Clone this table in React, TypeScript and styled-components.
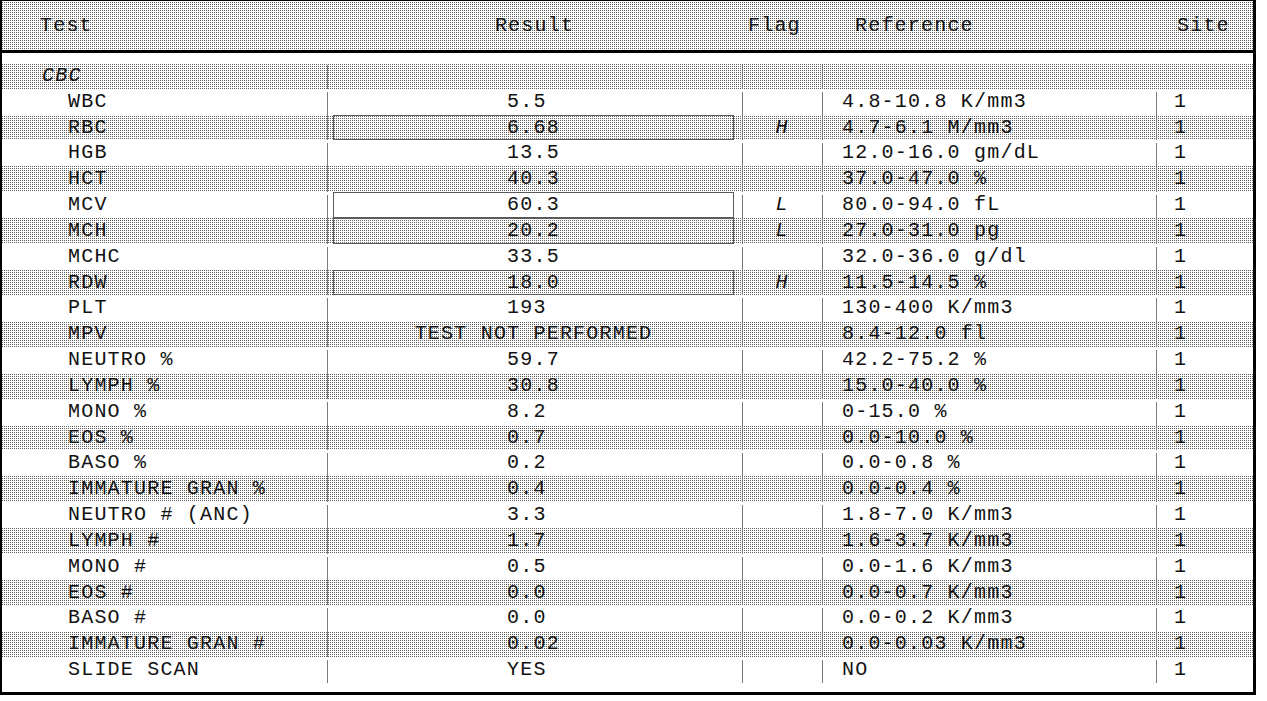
import React from "react";
import styled, { createGlobalStyle, css } from "styled-components";

const GlobalStyle = createGlobalStyle`
  html, body { margin: 0; padding: 0; background: #ffffff; }
  #root { width: 1267px; height: 701px; }
`;

const DOT = "#5e5e5e";

const dither = css`
  background-color: transparent;
  background-image:
    repeating-linear-gradient(90deg, ${DOT} 0px, ${DOT} 1px, #ffffff 1px, #ffffff 2px),
    repeating-linear-gradient(180deg, ${DOT} 0px, ${DOT} 1px, #ffffff 1px, #ffffff 2px);
  background-attachment: fixed, fixed;
  background-blend-mode: lighten, normal;
`;

const COLS = "325px 415px 80px 334px 1fr";

const Frame = styled.div`
  box-sizing: border-box;
  width: 1256px;
  height: 695px;
  border-style: solid;
  border-color: #000;
  border-width: 1px 3px 3px 2px;
  font-family: "Liberation Mono", "Courier New", monospace;
  font-size: 20px;
  letter-spacing: 1.2px;
  color: #111;
  display: flex;
  flex-direction: column;
`;

const Header = styled.div`
  ${dither};
  display: grid;
  grid-template-columns: ${COLS};
  height: 49px;
  border-bottom: 3px solid #000;
  align-items: center;
`;

type HCellProps = { $align?: "left" | "center"; $pad?: number };
const HeaderCell = styled.div<HCellProps>`
  text-align: ${(p) => p.$align ?? "left"};
  padding-left: ${(p) => p.$pad ?? 0}px;
  white-space: pre;
  line-height: 49px;
`;

const Body = styled.div`
  padding-top: 10px;
  display: flex;
  flex-direction: column;
`;

const Row = styled.div<{ $shaded: boolean }>`
  display: grid;
  grid-template-columns: ${COLS};
  height: 25.83px;
  line-height: 25.83px;
  ${(p) => (p.$shaded ? dither : "background: #fff;")}
`;

type CellProps = { $divider?: boolean; $gap?: number; $pad?: number; $align?: "left" | "center"; $italic?: boolean };
const Cell = styled.div<CellProps>`
  box-sizing: border-box;
  white-space: pre;
  text-align: ${(p) => p.$align ?? "left"};
  padding-left: ${(p) => p.$pad ?? 0}px;
  font-style: ${(p) => (p.$italic ? "italic" : "normal")};
  ${(p) =>
    p.$divider
      ? css`
          background-image: linear-gradient(#7a7a7a, #7a7a7a);
          background-repeat: no-repeat;
          background-position: 0 ${p.$gap ?? 0}px;
          background-size: 1px calc(100% - ${p.$gap ?? 0}px);
        `
      : ""}
`;

const ResultCell = styled(Cell)`
  display: flex;
  padding: 0 8px 0 6px;
`;

const ResultBox = styled.div<{ $boxed: boolean }>`
  box-sizing: border-box;
  flex: 1;
  height: 100%;
  text-align: center;
  border: 1px solid ${(p) => (p.$boxed ? "#5a5a5a" : "transparent")};
  line-height: 23.83px;
`;

type Item = { test: string; result?: string; flag?: string; ref?: string; site?: string; group?: boolean };

const items: Item[] = [
  { test: "CBC", group: true },
  { test: "WBC", result: "5.5", ref: "4.8-10.8 K/mm3" },
  { test: "RBC", result: "6.68", flag: "H", ref: "4.7-6.1 M/mm3" },
  { test: "HGB", result: "13.5", ref: "12.0-16.0 gm/dL" },
  { test: "HCT", result: "40.3", ref: "37.0-47.0 %" },
  { test: "MCV", result: "60.3", flag: "L", ref: "80.0-94.0 fL" },
  { test: "MCH", result: "20.2", flag: "L", ref: "27.0-31.0 pg" },
  { test: "MCHC", result: "33.5", ref: "32.0-36.0 g/dl" },
  { test: "RDW", result: "18.0", flag: "H", ref: "11.5-14.5 %" },
  { test: "PLT", result: "193", ref: "130-400 K/mm3" },
  { test: "MPV", result: "TEST NOT PERFORMED", ref: "8.4-12.0 fl" },
  { test: "NEUTRO %", result: "59.7", ref: "42.2-75.2 %" },
  { test: "LYMPH %", result: "30.8", ref: "15.0-40.0 %" },
  { test: "MONO %", result: "8.2", ref: "0-15.0 %" },
  { test: "EOS %", result: "0.7", ref: "0.0-10.0 %" },
  { test: "BASO %", result: "0.2", ref: "0.0-0.8 %" },
  { test: "IMMATURE GRAN %", result: "0.4", ref: "0.0-0.4 %" },
  { test: "NEUTRO # (ANC)", result: "3.3", ref: "1.8-7.0 K/mm3" },
  { test: "LYMPH #", result: "1.7", ref: "1.6-3.7 K/mm3" },
  { test: "MONO #", result: "0.5", ref: "0.0-1.6 K/mm3" },
  { test: "EOS #", result: "0.0", ref: "0.0-0.7 K/mm3" },
  { test: "BASO #", result: "0.0", ref: "0.0-0.2 K/mm3" },
  { test: "IMMATURE GRAN #", result: "0.02", ref: "0.0-0.03 K/mm3" },
  { test: "SLIDE SCAN", result: "YES", ref: "NO" },
];

const centerPad = (s: string) => (s.length % 2 === 1 ? s + "\u00a0" : s);

export default function App() {
  return (
    <>
      <GlobalStyle />
      <Frame>
        <Header>
          <HeaderCell $pad={38}>Test</HeaderCell>
          <HeaderCell $align="center">Result</HeaderCell>
          <HeaderCell $pad={6}>Flag</HeaderCell>
          <HeaderCell $pad={33}>Reference</HeaderCell>
          <HeaderCell $pad={21}>Site</HeaderCell>
        </Header>
        <Body>
          {items.map((it, i) => {
            const shaded = i % 2 === 0;
            const gap = shaded ? 0 : 3;
            if (it.group) {
              return (
                <Row key={it.test} $shaded={shaded}>
                  <Cell $pad={40} $italic>
                    {it.test}
                  </Cell>
                  <Cell $divider $gap={2} />
                  <Cell $divider $gap={2} />
                  <Cell $divider $gap={2} />
                  <Cell />
                </Row>
              );
            }
            return (
              <Row key={it.test} $shaded={shaded}>
                <Cell $pad={66}>{it.test}</Cell>
                <ResultCell $divider $gap={gap}>
                  <ResultBox $boxed={!!it.flag}>{centerPad(it.result ?? "")}</ResultBox>
                </ResultCell>
                <Cell $divider $gap={gap} $align="center" $italic>
                  {it.flag ?? ""}
                </Cell>
                <Cell $divider $gap={gap} $pad={20}>
                  {it.ref}
                </Cell>
                <Cell $divider $gap={gap} $pad={18}>
                  {it.site ?? "1"}
                </Cell>
              </Row>
            );
          })}
        </Body>
      </Frame>
    </>
  );
}
